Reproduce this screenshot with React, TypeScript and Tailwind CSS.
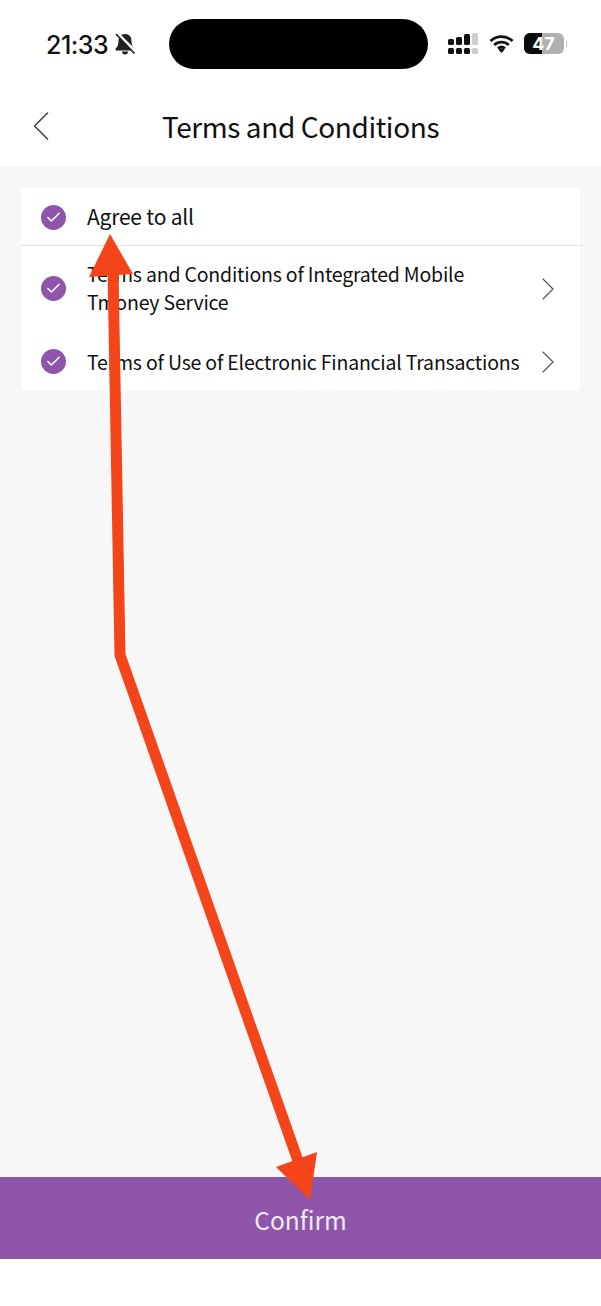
import React from 'react';
import { ChevronLeft, ChevronRight, Check } from 'lucide-react';

function CheckDot() {
  return (
    <span className="flex h-[25px] w-[25px] shrink-0 items-center justify-center rounded-full bg-[#8e55ab]">
      <Check size={17} strokeWidth={2.2} className="text-white" />
    </span>
  );
}

function SignalDots() {
  const cols = [
    { h: 'h-[6px]', c: 'bg-[#111]' },
    { h: 'h-[8px]', c: 'bg-[#111]' },
    { h: 'h-[11px]', c: 'bg-[#111]' },
    { h: 'h-[12px]', c: 'bg-[#ccc]' },
  ];
  return (
    <div className="flex items-end gap-[2.5px]">
      {cols.map((col, i) => (
        <div key={i} className="flex flex-col items-center gap-[2.500px]">
          <div className={`w-[5.5px] rounded-[1.5px] ${col.h} ${col.c}`} />
          <div className={`h-[6px] w-[5.5px] rounded-[1.5px] ${col.c}`} />
        </div>
      ))}
    </div>
  );
}

function StatusBar() {
  return (
    <div className="flex h-[94px] items-center pl-[46px]">
      <span className="mt-[-4px] w-[66px] text-[25px] leading-none font-medium text-[#111] font-['Inter',sans-serif] tracking-[-0.5px]">21:33</span>
      <svg width="22" height="22" viewBox="0 0 22 22" className="mt-[-6px] ml-[2px]">
        <path d="M11 1c-4.500 0-6.500 3-6.500 7 0 4.500-1.500 6-3 8v1.500h19V16c-1.500-2-3-3.500-3-8 0-4-2-7-6.500-7z" fill="#222" />
        <path d="M8 18.500a3 3 0 0 0 6 0z" fill="#222" />
        <path d="M3 0.500L21.500 19" stroke="#fff" strokeWidth="3.600" />
        <path d="M2 1L20.500 20.500" stroke="#222" strokeWidth="1.800" />
      </svg>
      <div className="ml-[33px] mt-[-6px] h-[50px] w-[259px] rounded-[25px] bg-black" />
      <div className="ml-[20px] mt-[-7px] flex items-center">
        <SignalDots />
        <svg width="25" height="19" viewBox="0 0 25 19" className="ml-[11px]">
          <path d="M1.500 7a16 16 0 0 1 22 0M5.300 11a10.500 10.500 0 0 1 14.400 0M9 14.500a5.500 5.500 0 0 1 7 0" fill="none" stroke="#111" strokeWidth="2.800" />
          <path d="M12.500 19l-3-3.200a4.500 4.500 0 0 1 6 0z" fill="#111" />
        </svg>
        <div className="relative ml-[10px] flex h-[21px] w-[40px] overflow-hidden rounded-[6px] bg-[#b0b0b0]">
          <div className="h-full w-[18px] bg-[#0c0c0c]" />
          <span className="absolute inset-0 flex items-center justify-center text-[18px] leading-none font-bold text-white font-['Inter',sans-serif]">47</span>
        </div>
        <div className="ml-[2px] h-[6px] w-[1.5px] rounded-r bg-[#bbb]" />
      </div>
    </div>
  );
}

function Row({ text, chevron, tall, big }: { text: React.ReactNode; chevron?: boolean; tall?: boolean; big?: boolean }) {
  return (
    <div className={`flex items-center pl-[20px] ${tall ? 'h-[86px] pb-[1px]' : big ? 'h-[58px]' : 'h-[59px]'}`}>
      <CheckDot />
      <span className={`ml-[21px] w-[440px] text-[#111] ${big ? 'mt-[-2px] text-[21px] leading-[29px] tracking-[-0.2px]' : tall ? 'mt-[-2px] text-[19.5px] leading-[28px] tracking-[-0.2px]' : 'text-[19.5px] leading-[28px] tracking-[-0.2px]'}`}>{text}</span>
      {chevron && <ChevronRight size={40} strokeWidth={0.7} className="ml-[1px] text-[#555]" />}
    </div>
  );
}

export default function App() {
  return (
    <div className="relative flex h-[1306px] w-[601px] flex-col overflow-hidden bg-white font-['Noto_Sans_CJK_KR','Noto_Sans',sans-serif]">
      <StatusBar />

      <div className="relative flex h-[72px] items-center justify-center pb-[9px]">
        <ChevronLeft size={52} strokeWidth={0.75} className="absolute top-[6px] left-[15px] text-[#444]" />
        <h1 className="text-[28px] leading-none font-normal tracking-[-0.4px] text-[#111]">Terms and Conditions</h1>
      </div>

      <div className="flex-1 bg-[#f7f7f7] px-[21px] pt-[22px]">
        <div className="rounded-[4px] bg-white">
          <div className="relative">
            <Row big text="Agree to all" />
            <div className="absolute bottom-0 left-0 h-[1px] w-[562px] bg-[#e2e2e2]" />
          </div>
          <Row tall chevron text={<>Terms and Conditions of Integrated Mobile<br />Tmoney Service</>} />
          <Row chevron text="Terms of Use of Electronic Financial Transactions" />
        </div>
      </div>

      <button className="flex h-[82px] w-full items-center justify-center bg-[#8e55ab] pt-[4px] text-[24.5px] leading-none text-[#f5e9f7]">Confirm</button>
      <div className="h-[47px] bg-white" />

      {/* red annotation arrow drawn on top of the screenshot */}
      <svg width="601" height="1306" viewBox="0 0 601 1306" className="pointer-events-none absolute top-0 left-0">
        <path d="M113 270L120 655L303 1175" fill="none" stroke="#f4451a" strokeWidth="11" strokeLinejoin="bevel" />
        <path d="M110 234L133 274L89 277Z" fill="#f4451a" />
        <path d="M310 1200L276 1167L317 1152Z" fill="#f4451a" />
      </svg>
    </div>
  );
}
